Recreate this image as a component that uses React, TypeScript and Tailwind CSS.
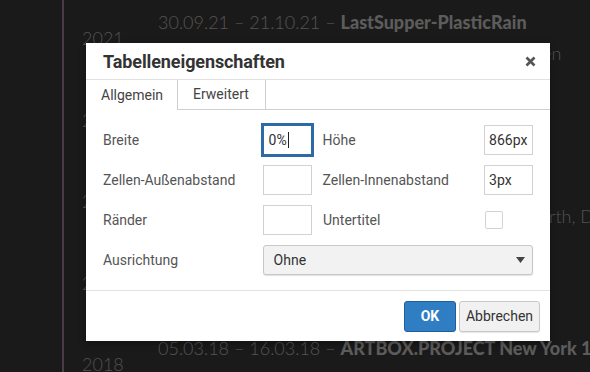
import React from "react";

const entries = [
  {
    year: "2021",
    date: "30.09.21 – 21.10.21 – ",
    title: "LastSupper-PlasticRain",
    sub: "Einzelausstellung – Galerie im Kunstraum 1, Bremen",
  },
  {
    year: "2020",
    date: "12.11.20 – 03.12.20 – ",
    title: "Farbe und Form",
    sub: "Gruppen-Ausstellung – Kunsthaus | Köln",
  },
  {
    year: "2019",
    date: "14.06.19 – 30.06.19 – ",
    title: "Sommerlicht",
    sub: "Gruppen-Ausstellung – Galerie Am Rheinufer | Wörth, Deutschland",
  },
  {
    year: "2019",
    date: "02.02.19 – 23.02.19 – ",
    title: "Stillleben",
    sub: "Einzelausstellung – Atelier Nord | Hamburg",
  },
  {
    year: "2018",
    date: "05.03.18 – 16.03.18 – ",
    title: "ARTBOX.PROJECT New York 1.0",
    sub: "Gruppen-Ausstellung – Agora Art World | New York | USA",
  },
];

function Row({
  label,
  children,
  label2,
  children2,
}: {
  label: string;
  children: React.ReactNode;
  label2?: string;
  children2?: React.ReactNode;
}) {
  return (
    <div className="flex h-[30px] items-center">
      <div className="w-[160px] text-[14px] text-[#555]">{label}</div>
      {children}
      {label2 !== undefined && (
        <>
          <div className="ml-[11px] w-[162px] text-[14px] text-[#555]">{label2}</div>
          {children2}
        </>
      )}
    </div>
  );
}

function Input({ value, focused }: { value?: string; focused?: boolean }) {
  return (
    <div
      className={
        focused
          ? "flex h-[30px] w-[49px] items-center border border-[#2d6aa6] pl-[5px] text-[14px] text-[#333] outline-2 outline-[#2d6aa6]"
          : "flex h-[30px] w-[49px] items-center border border-[#d2d2d2] pl-[4px] text-[14px] text-[#333]"
      }
    >
      {value}
      {focused && <span className="ml-[1px] inline-block h-[16px] w-[1px] bg-[#222]" />}
    </div>
  );
}

export default function App() {
  return (
    <div className="relative h-[372px] w-[590px] overflow-hidden bg-[#1b1a1a]" style={{ fontFamily: "Lato, sans-serif" }}>
      {/* background timeline */}
      <div className="ml-[62px] h-full border-l-2 border-[#4a3a4c] pt-[7px]">
        {entries.map((e, i) => (
          <div key={i} className="flex h-[81.5px] whitespace-nowrap">
            <div className="w-[94px] shrink-0 pl-[18px] pt-[16px] text-[18px] font-light leading-[31px] text-[#525252]">
              {e.year}
            </div>
            <div className="text-[18px] leading-[31px]">
              <div className="font-light text-[#555]">
                {e.date}
                <span className="font-black text-[#5c5c5c]">{e.title}</span>
              </div>
              <div className="font-light text-[#525252]">{e.sub}</div>
            </div>
          </div>
        ))}
      </div>

      {/* dialog */}
      <div
        className="absolute left-[86px] top-[43px] w-[464px] bg-white shadow-[0_3px_7px_rgba(0,0,0,0.3)]"
        style={{ fontFamily: "Roboto, sans-serif" }}
      >
        <div className="flex h-[37px] items-center justify-between border-b border-[#e2e2e2] pl-[17px] pr-[14px]">
          <div className="text-[18px] font-bold tracking-[-0.1px] text-[#333]">Tabelleneigenschaften</div>
          <svg width="11" height="11" viewBox="0 0 11 11" className="mt-[1px]">
            <path d="M1.5 1.5 L9.5 9.5 M9.5 1.5 L1.5 9.5" stroke="#555" strokeWidth="2.6" strokeLinecap="butt" />
          </svg>
        </div>

        <div className="flex h-[30px]">
          <div className="flex w-[92px] items-center border-r border-[#cfcfcf] pl-[15px] text-[14px] text-[#444]">
            Allgemein
          </div>
          <div className="flex w-[88px] items-center border-r border-b border-[#cfcfcf] pl-[15px] text-[14px] text-[#444]">
            Erweitert
          </div>
          <div className="flex-1 border-b border-[#cfcfcf]" />
        </div>

        <div className="flex flex-col gap-[10px] px-[17px] pt-[15px] pb-[15px]">
          <Row label="Breite" label2="Höhe" children2={<Input value="866px" />}>
            <Input value="0%" focused />
          </Row>
          <Row label="Zellen-Außenabstand" label2="Zellen-Innenabstand" children2={<Input value="3px" />}>
            <Input />
          </Row>
          <Row
            label="Ränder"
            label2="Untertitel"
            children2={<div className="h-[18px] w-[18px] rounded-[2px] border border-[#d2d2d2]" />}
          >
            <Input />
          </Row>
          <Row label="Ausrichtung">
            <div className="flex h-[30px] w-[271px] items-center justify-between rounded-[3px] border border-[#c8c8c8] bg-[#f2f2f2] pl-[10px] pr-[7px] text-[14px] text-[#333] shadow-[0_1px_1px_rgba(0,0,0,0.12)]">
              <span>Ohne</span>
              <svg width="9" height="6" viewBox="0 0 9 6">
                <path d="M0 0 H9 L4.5 6 Z" fill="#444" />
              </svg>
            </div>
          </Row>
        </div>

        <div className="flex h-[51px] items-start justify-end gap-[3px] border-t border-[#e2e2e2] pr-[10px] pt-[10px]">
          <div className="flex h-[31px] w-[52px] items-center justify-center rounded-[3px] border border-[#1f5e98] bg-[#2f7ec4] text-[14px] font-bold text-white">
            OK
          </div>
          <div className="flex h-[31px] w-[81px] items-center justify-center rounded-[3px] border border-[#c8c8c8] bg-[#f1f1f1] text-[14px] text-[#333] shadow-[0_1px_1px_rgba(0,0,0,0.1)]">
            Abbrechen
          </div>
        </div>
      </div>
    </div>
  );
}
